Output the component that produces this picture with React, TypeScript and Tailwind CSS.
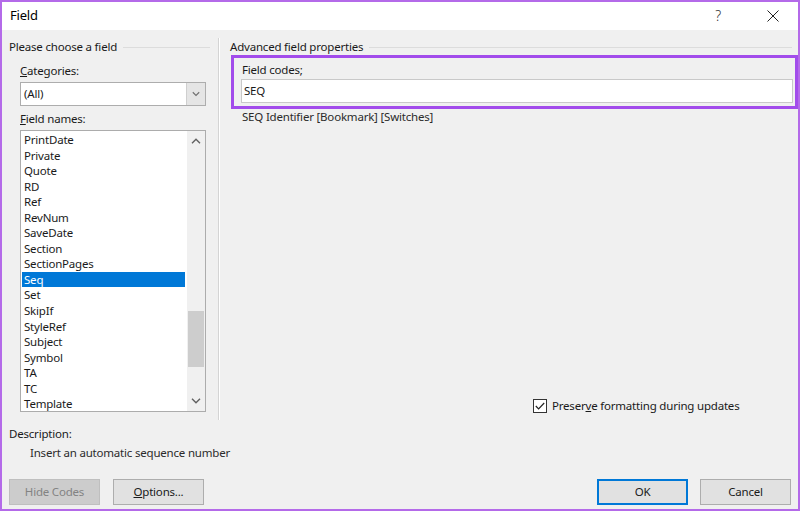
import React from 'react';

const fieldNames = [
  'PrintDate', 'Private', 'Quote', 'RD', 'Ref', 'RevNum', 'SaveDate', 'Section',
  'SectionPages', 'Seq', 'Set', 'SkipIf', 'StyleRef', 'Subject', 'Symbol', 'TA', 'TC', 'Template',
];

const Chevron: React.FC<{ up?: boolean; className?: string }> = ({ up, className }) => (
  <svg width="10" height="6" viewBox="0 0 10 6" className={className}>
    <path
      d={up ? 'M1 5.2 L5 1.2 L9 5.2' : 'M1 0.8 L5 4.8 L9 0.8'}
      fill="none"
      stroke="currentColor"
      strokeWidth="1.4"
    />
  </svg>
);

const GroupHeader: React.FC<{ title: string; lineRight: string }> = ({ title, lineRight }) => (
  <div className={`flex items-center h-[16px] ${lineRight}`}>
    <span className="whitespace-nowrap">{title}</span>
    <div className="flex-1 ml-[6px] border-t border-[#dcdcdc]" />
  </div>
);

const Button: React.FC<{ children: React.ReactNode; disabled?: boolean; primary?: boolean }> = ({
  children,
  disabled,
  primary,
}) => (
  <div
    className={`w-[91px] h-[26px] flex items-center justify-center border ${
      disabled
        ? 'bg-[#cccccc] border-[#bfbfbf] text-[#838383]'
        : primary
        ? 'bg-[#e1e1e1] border-[#0078d7] shadow-[inset_0_0_0_1px_#0078d7]'
        : 'bg-[#e1e1e1] border-[#adadad]'
    }`}
  >
    {children}
  </div>
);

export default function App() {
  return (
    <div
      className="w-[800px] h-[511px] border-2 border-[#b46ae9] flex flex-col text-[11.5px] tracking-[-0.2px] text-[#1a1a1a] leading-[16px]"
      style={{ fontFamily: '"Noto Sans", "Open Sans", sans-serif' }}
    >
      {/* title bar */}
      <div className="h-[28px] bg-white flex items-center pl-[8px]">
        <span className="text-[13px] text-black flex-1 mt-[-2px]">Field</span>
        <span className="text-[14px] text-[#333] mr-[46px] font-light">?</span>
        <svg width="12" height="12" viewBox="0 0 12 12" className="mr-[19px]">
          <path d="M0.5 0.5 L11.5 11.5 M11.5 0.5 L0.5 11.5" stroke="#222" strokeWidth="1" />
        </svg>
      </div>

      <div className="flex-1 bg-[#f0f0f0] flex flex-col">
        <div className="flex h-[390px]">
          {/* left column */}
          <div className="w-[216px] pl-[7px] pt-[9px] flex flex-col">
            <GroupHeader title="Please choose a field" lineRight="mr-[8px]" />
            <div className="pl-[11px] mt-[8px]">
              <div className="h-[16px]">
                <span className="underline">C</span>ategories:
              </div>
              <div className="mt-[3px] w-[186px] h-[24px] bg-white border border-[#adadad] flex items-center">
                <span className="pl-[3px] flex-1">(All)</span>
                <div className="w-[19px] h-[22px] bg-[#e5e5e5] border-l border-[#cfcfcf] flex items-center justify-center text-[#707070]">
                  <Chevron className="w-[8px]" />
                </div>
              </div>
              <div className="h-[16px] mt-[5px]">
                <span className="underline">F</span>ield names:
              </div>
              <div className="mt-[3px] w-[186px] h-[282px] bg-white border border-[#acacac] flex">
                <div className="flex-1 pt-[1px] pl-[1px] pr-[2px] overflow-hidden">
                  {fieldNames.map((name) => (
                    <div
                      key={name}
                      className={`h-[15.55px] leading-[15.55px] pl-[2px] ${
                        name === 'Seq' ? 'bg-[#0078d7] text-white' : ''
                      }`}
                    >
                      {name}
                    </div>
                  ))}
                </div>
                <div className="w-[18px] bg-[#f0f0f0] flex flex-col items-center text-[#606060]">
                  <div className="h-[20px] flex items-center justify-center">
                    <Chevron up />
                  </div>
                  <div className="w-[16px] h-[56px] bg-[#cdcdcd] mt-[160px]" />
                  <div className="flex-1" />
                  <div className="h-[20px] flex items-center justify-center">
                    <Chevron />
                  </div>
                </div>
              </div>
            </div>
          </div>

          {/* separator */}
          <div className="w-[2px] mt-[8px] flex">
            <div className="w-px bg-[#d4d4d4]" />
            <div className="w-px bg-white" />
          </div>

          {/* right column */}
          <div className="flex-1 pl-[10px] pt-[9px] flex flex-col">
            <GroupHeader title="Advanced field properties" lineRight="mr-[6px]" />
            <div className="ml-[1px] h-[54px] border-[3px] border-[#a24ceb] flex flex-col pl-[8px] pr-[2px]">
              <div className="h-[16px] mt-[4px]">Field codes;</div>
              <div className="mt-[1px] ml-[-1px] h-[24px] bg-white border border-[#c9c9c9] flex items-center pl-[2px]">
                SEQ
              </div>
            </div>
            <div className="h-[16px] pl-[12px] text-[#2b2b2b]">SEQ Identifier [Bookmark] [Switches]</div>
            <div className="flex-1" />
            <div className="flex items-center ml-[303px] mb-[6px]">
              <div className="w-[14px] h-[14px] bg-white border border-[#333] flex items-center justify-center">
                <svg width="10" height="8" viewBox="0 0 10 8">
                  <path d="M0.8 4 L3.6 6.8 L9.2 1" fill="none" stroke="#222" strokeWidth="1.2" />
                </svg>
              </div>
              <span className="ml-[5px]">
                Preser<span className="underline">v</span>e formatting during updates
              </span>
            </div>
          </div>
        </div>

        {/* description */}
        <div className="pl-[7px] mt-[6px] h-[16px]">Description:</div>
        <div className="pl-[28px] mt-[3px] h-[16px] text-[#2b2b2b]">Insert an automatic sequence number</div>

        {/* buttons */}
        <div className="flex mt-[18px] pl-[7px] pr-[7px]">
          <Button disabled>Hide Codes</Button>
          <div className="ml-[13px]">
            <Button>
              <span>
                <span className="underline">O</span>ptions...
              </span>
            </Button>
          </div>
          <div className="flex-1" />
          <Button primary>OK</Button>
          <div className="ml-[12px]">
            <Button>Cancel</Button>
          </div>
        </div>
      </div>
    </div>
  );
}
